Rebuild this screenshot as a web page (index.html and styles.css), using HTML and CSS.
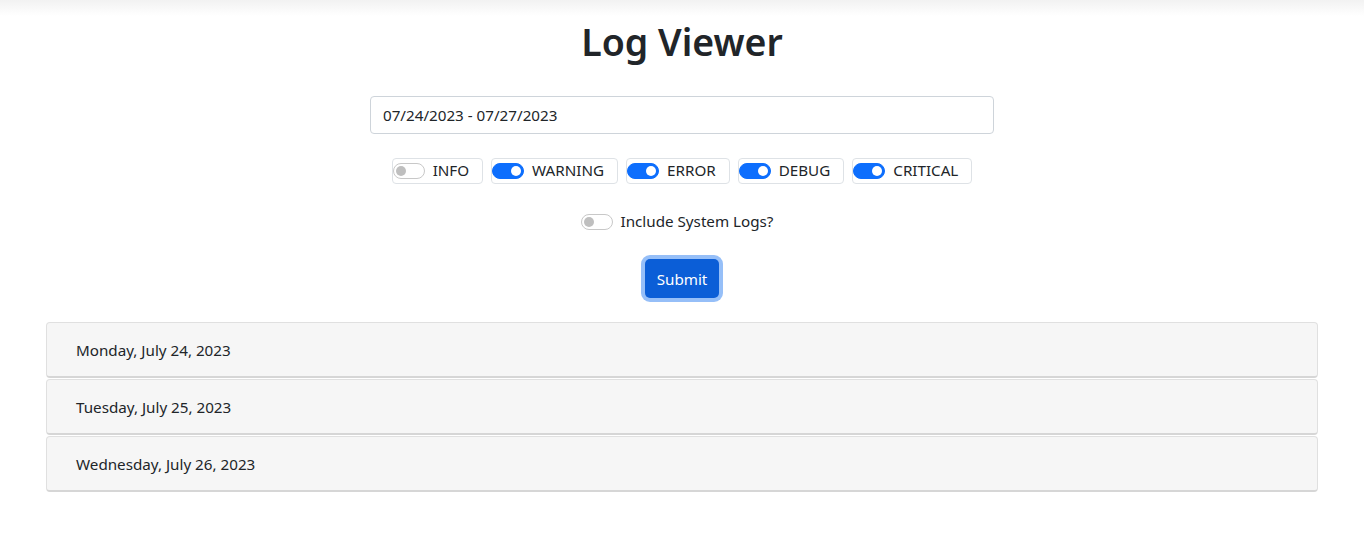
FILE: index.html
```html
<!DOCTYPE html>
<html lang="en">
<head>
<meta charset="utf-8">
<title>Log Viewer</title>
<link rel="stylesheet" href="styles.css">
</head>
<body>
<div class="topbar"></div>
<main class="page">
  <h1 class="title">Log Viewer</h1>
  <form class="filters">
    <input class="date-input" type="text" value="07/24/2023 - 07/27/2023">
    <div class="levels">
      <label class="level"><span class="switch"></span><span>INFO</span></label>
      <label class="level"><span class="switch on"></span><span>WARNING</span></label>
      <label class="level"><span class="switch on"></span><span>ERROR</span></label>
      <label class="level"><span class="switch on"></span><span>DEBUG</span></label>
      <label class="level"><span class="switch on"></span><span>CRITICAL</span></label>
    </div>
    <label class="system"><span class="switch"></span><span>Include System Logs?</span></label>
    <button class="submit" type="button">Submit</button>
  </form>
  <section class="days">
    <div class="day">Monday, July 24, 2023</div>
    <div class="day">Tuesday, July 25, 2023</div>
    <div class="day">Wednesday, July 26, 2023</div>
  </section>
</main>
</body>
</html>
```
FILE: styles.css
```css
* { box-sizing: border-box; }
html, body { margin: 0; padding: 0; background: #fff; }
body {
  font-family: "Noto Sans", "Open Sans", sans-serif;
  font-size: 15.2px;
  color: #212529;
  width: 1364px;
}
.topbar {
  height: 16px;
  background: linear-gradient(#f2f2f2, #ffffff);
}
.page {
  padding: 0 46px;
}
.title {
  margin: 2px 0 0;
  text-align: center;
  font-size: 37.5px;
  font-weight: 600;
  line-height: 48px;
}
.filters {
  display: flex;
  flex-direction: column;
  align-items: center;
}
.date-input {
  margin-top: 30px;
  width: 624px;
  height: 38px;
  border: 1px solid #ced4da;
  border-radius: 4px;
  padding: 0 12px;
  font: inherit;
  color: #212529;
}
.levels {
  display: flex;
  gap: 8px;
  margin-top: 24px;
}
.level {
  display: flex;
  align-items: center;
  gap: 8px;
  height: 26px;
  border: 1px solid #dee2e6;
  border-radius: 4px;
  padding: 0 13px 0 0;
  line-height: 1;
}
.switch {
  position: relative;
  display: inline-block;
  width: 32px;
  height: 16px;
  border: 1px solid #c8c8c8;
  border-radius: 8px;
  background: #fff;
}
.switch::after {
  content: "";
  position: absolute;
  top: 2px;
  left: 2px;
  width: 10px;
  height: 10px;
  border-radius: 50%;
  background: #bfbfbf;
}
.switch.on {
  background: #0d6efd;
  border-color: #0d6efd;
}
.switch.on::after {
  left: auto;
  right: 2px;
  background: #fff;
}
.system {
  display: flex;
  align-items: center;
  gap: 8px;
  margin-top: 30px;
  margin-right: 10px;
  line-height: 1;
}
.submit {
  margin-top: 29px;
  width: 74px;
  height: 39px;
  border: none;
  border-radius: 5px;
  background: #0b5ed7;
  box-shadow: 0 0 0 4px #96bff8;
  color: #fff;
  font: inherit;
  padding: 0;
}
.days {
  margin-top: 24px;
  display: flex;
  flex-direction: column;
  gap: 1px;
}
.day {
  height: 56px;
  display: flex;
  align-items: center;
  padding-left: 29px;
  background: #f6f6f6;
  border: 1px solid #e0e0e0;
  border-bottom: 2px solid #d6d6d6;
  border-radius: 4px;
}
```
